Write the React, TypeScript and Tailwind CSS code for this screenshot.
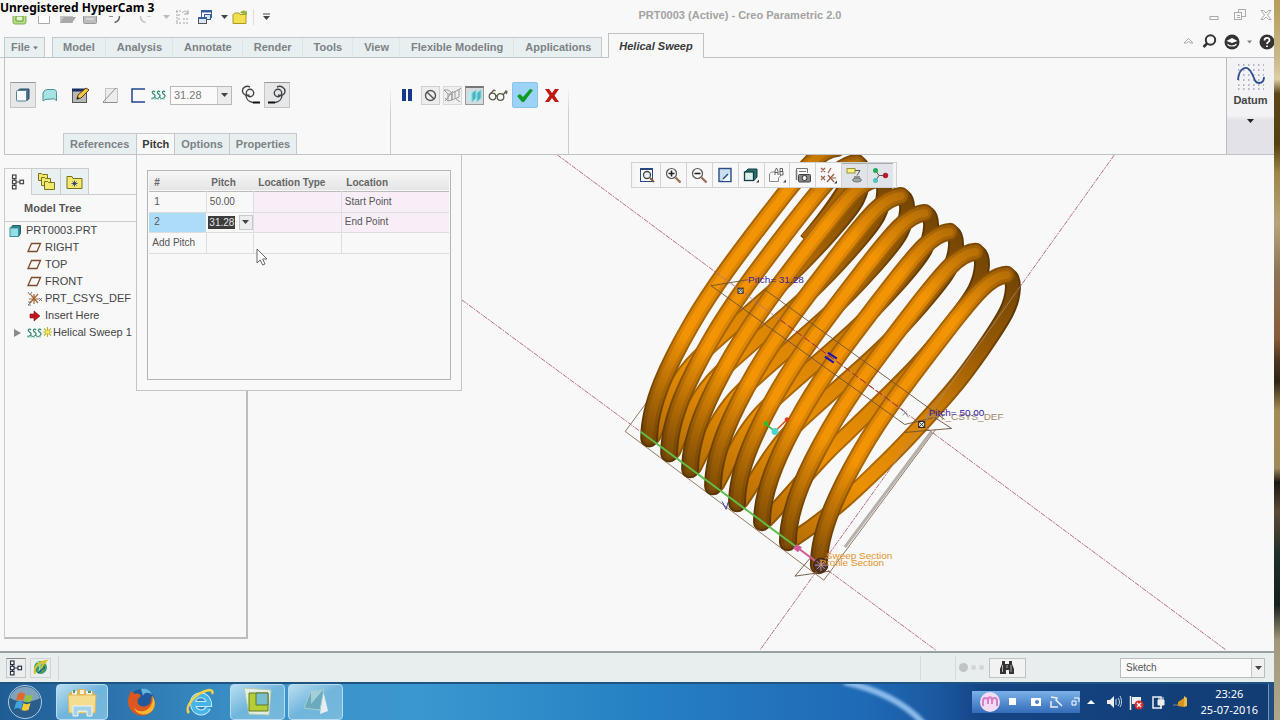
import type { ReactNode } from "react";

const TABS = ["Model", "Analysis", "Annotate", "Render", "Tools", "View", "Flexible Modeling", "Applications"];

const PLANES = ["RIGHT", "TOP", "FRONT"];

// lower end of every coil turn on the sweep trajectory
const TURNS = [
  [649, 439],
  [669, 454],
  [690, 470],
  [713, 487],
  [737, 504],
  [762, 523],
  [788, 543],
  [819, 566],
];

function Icon({ w = 16, h = 16, children }: { w?: number; h?: number; children: ReactNode }) {
  return (
    <svg width={w} height={h} viewBox={`0 0 ${w} ${h}`} fill="none" className="shrink-0" aria-hidden="true">
      {children}
    </svg>
  );
}

function Caret({ className = "text-[#444]" }: { className?: string }) {
  return (
    <svg width="7" height="4" viewBox="0 0 7 4" className={`shrink-0 ${className}`} aria-hidden="true">
      <path d="M0 0h7L3.5 4z" fill="currentColor" />
    </svg>
  );
}

function TreeIcon({ color = "#444" }: { color?: string }) {
  return (
    <Icon w={14} h={16}>
      <path d="M3.5 4v8M5 8h5" stroke={color} />
      <g fill="#fff" stroke={color} strokeWidth="1.2">
        <rect x="1.5" y="1" width="3.5" height="3.5" />
        <rect x="1.5" y="6.2" width="3.5" height="3.5" />
        <rect x="1.5" y="11.4" width="3.5" height="3.5" />
        <rect x="9" y="6.2" width="3.5" height="3.5" />
      </g>
    </Icon>
  );
}

function CoilIcon() {
  return (
    <Icon w={15} h={10}>
      <g stroke="#2f8673" strokeWidth="1.2">
        <path d="M4 2C2 0 .5 2 2 3.500S5 5 3.500 7 .500 8 .500 8" />
        <path d="M9 2C7 0 5.500 2 7 3.500S10 5 8.500 7 5 9 3.500 7" />
        <path d="M14 2C12 0 10.500 2 12 3.500S15 5 13.500 7 10 9 8.500 7" />
      </g>
      <path d="M0 9h14" stroke="#7fbfae" strokeDasharray="2 1" />
    </Icon>
  );
}

function QuickAccess() {
  return (
    <div className="flex h-[34px] items-center pl-3">
      <button aria-label="Creo" className="w-[24px]">
        <Icon w={16} h={18}>
          <rect x="1" y="2" width="13" height="14" rx="2" fill="#b6dd83" stroke="#7fae57" />
          <path d="M4 8h7v5H4z" fill="#e5f5c8" stroke="#5f9a3e" />
        </Icon>
      </button>
      <button aria-label="New" className="w-[23px]">
        <Icon w={16} h={18}>
          <path d="M2.500 2.500h8l3 3v10h-11z" fill="#fff" stroke="#aaa" />
        </Icon>
      </button>
      <button aria-label="Open" className="w-[23px]">
        <Icon w={18} h={18}>
          <path d="M1 15V6h5l1 2h7v7z" fill="#c4c4c4" />
          <path d="M1 15l4-6h12l-4 6z" fill="#a8a8a8" />
        </Icon>
      </button>
      <button aria-label="Save" className="w-[25px]">
        <Icon w={16} h={18}>
          <rect x="1.500" y="3.500" width="13" height="12" rx="1" fill="#bdbdbd" stroke="#999" />
          <path d="M4 11h8" stroke="#eee" />
        </Icon>
      </button>
      <button aria-label="Undo" className="w-[32px]">
        <Icon w={16} h={18}>
          <path d="M2 8C4 3 12 2 12.500 8c0 4-3 6-5 6.500M2 8V3M2 8h4" stroke="#666" strokeWidth="1.500" />
        </Icon>
      </button>
      <button aria-label="Redo" className="flex w-[36px] items-center gap-2">
        <Icon w={16} h={18}>
          <path d="M12 8C10 3 2 2 1.500 8c0 4 3 6 5 6.500M12 8V3M12 8H8" stroke="#c2c2c2" strokeWidth="1.500" />
        </Icon>
        <Caret className="text-[#bbb]" />
      </button>
      <button aria-label="Regenerate" className="w-[22px]">
        <Icon w={15} h={16}>
          <path d="M2 2v12M1 2h5M3 6h3M3 10h3M1 14h5M8 10h6M8 14h6" stroke="#a5a5a5" strokeDasharray="2 1" />
          <path d="M7 4c2-3 5-2 6 1m0-4v4h-4" stroke="#a5a5a5" />
        </Icon>
      </button>
      <button aria-label="Windows" className="flex w-[35px] items-center gap-2">
        <Icon w={16} h={16}>
          <rect x="4.500" y="1.500" width="10" height="7" fill="#fff" stroke="#365f9b" />
          <path d="M4 2.500h11" stroke="#365f9b" strokeWidth="2" />
          <rect x="7.500" y="5.500" width="6" height="5" fill="#dbe6f5" stroke="#365f9b" />
          <rect x="1.500" y="8.500" width="8" height="6" fill="#dbe6f5" stroke="#555" />
          <path d="M1 9h9" stroke="#365f9b" strokeWidth="2" />
        </Icon>
        <Caret />
      </button>
      <button aria-label="Close" className="flex w-[22px] border-r border-[#ddd]">
        <Icon w={17} h={16}>
          <path d="M1 14.500v-9l2-1.500h4l1 1.500h6v9z" fill="#f4e04f" stroke="#ab9a2a" />
          <path d="M8 4c2-3 5-3 6-1l1-2v5h-5l2-1" fill="#9ab33c" />
        </Icon>
      </button>
      <button aria-label="Customize" className="ml-[8px]">
        <Icon w={9} h={8}>
          <path d="M1 1h7" stroke="#444" />
          <path d="M1 3h7L4.500 7z" fill="#444" />
        </Icon>
      </button>
    </div>
  );
}

function TitleBar() {
  return (
    <header className="relative flex items-start justify-between">
      <QuickAccess />
      <h1 className="absolute inset-x-0 top-[8px] mx-auto w-fit pl-[206px] text-[11px] leading-[14px] font-bold text-[#a3a3a3]">
        PRT0003 (Active) - Creo Parametric 2.0
      </h1>
      <div className="relative flex h-[30px] items-center gap-[14px] pr-[2px]">
        <button aria-label="Minimize">
          <Icon w={11} h={12}>
            <rect x="1" y="7.500" width="8" height="3" stroke="#aaa" />
          </Icon>
        </button>
        <button aria-label="Restore">
          <Icon w={12} h={12}>
            <rect x="4.500" y=".500" width="7" height="7" fill="#f7f7f7" stroke="#aaa" />
            <rect x=".500" y="3.500" width="7" height="7" fill="#f7f7f7" stroke="#aaa" />
            <path d="M3 6.500h3M3 8.500h3" stroke="#aaa" />
          </Icon>
        </button>
        <button aria-label="Close window">
          <Icon w={12} h={12}>
            <path d="M1 1.500h2.500L6 4l2.500-2.500H11L7.500 6l3.500 4.500H8.500L6 8l-2.500 2.500H1L4.500 6z" stroke="#aaa" />
          </Icon>
        </button>
      </div>
      <span className="absolute top-0 left-0 bg-[#f8f8f8] pr-1 font-['Noto_Sans',sans-serif] text-[12px] leading-[16px] font-bold text-black">
        Unregistered HyperCam 3
      </span>
    </header>
  );
}

function RibbonTabs() {
  return (
    <nav className="flex h-[24px] items-end border-b border-[#bfc3c6] pl-1 text-[11px] font-bold text-[#7d8285]">
      <button className="flex h-[20px] w-[41px] items-center justify-center gap-[3px] border border-b-0 border-[#c2c9cb] bg-[#e9f0f1]">
        File
        <Caret className="w-[5px] text-[#777]" />
      </button>
      <div className="ml-[7px] flex h-[20px] gap-px border border-b-0 border-[#c2c9cb] bg-[#e7eff0]">
        {TABS.map((t) => (
          <button key={t} className="border-r border-[#dde5e7] px-[10px] last:border-r-0">
            {t}
          </button>
        ))}
      </div>
      <button className="relative top-px ml-[6px] h-[25px] border border-b-0 border-[#bfc3c6] bg-[#f8f8f8] px-[10px] text-[#3a3a3a] italic">
        Helical Sweep
      </button>
      <div className="ml-auto flex h-[24px] items-center gap-[7px] pb-[7px]">
        <button aria-label="Minimize ribbon">
          <Icon w={12} h={10}>
            <path d="M1 6l4.500-4.500L10 6H7.500l-2-1.500-2 1.500z" stroke="#aaa" />
          </Icon>
        </button>
        <button aria-label="Search">
          <Icon w={15} h={15}>
            <circle cx="8.500" cy="6" r="4.700" stroke="#333" strokeWidth="2" />
            <path d="M5 9.500L1.500 13" stroke="#333" strokeWidth="2.600" />
          </Icon>
        </button>
        <button aria-label="Learning" className="flex items-center gap-[7px]">
          <Icon w={16} h={16}>
            <circle cx="8" cy="8" r="7.500" fill="#333" />
            <path d="M2.500 7L8 4l5.500 3L8 9z" fill="#fff" />
            <path d="M3.500 9.500c2 2.500 6 2.500 9 0v1.500c-2 2-7 2-9 0z" fill="#fff" />
          </Icon>
          <Caret className="w-[5px]" />
        </button>
        <button aria-label="Help">
          <Icon w={15} h={16}>
            <circle cx="8" cy="8" r="7.500" fill="#333" />
            <path d="M5.500 6.500C5.500 3 10.500 3 10.500 6.200 10.500 8 8 7.800 8 10M8 11.500v1.500" stroke="#fff" strokeWidth="1.800" />
          </Icon>
        </button>
      </div>
    </nav>
  );
}

function PitchTable() {
  return (
    <div className="absolute -left-px top-full z-20 h-[237px] w-[326px] cursor-default border border-[#c4c4c4] bg-[#f8f8f8] px-[10px] pt-[15px] pb-[10px] font-normal">
      <div className="h-full border border-[#b5b5b5] px-px">
        <table className="w-full table-fixed border-collapse text-left text-[10px] leading-[12px] text-[#555]">
          <colgroup>
            <col className="w-[57px]" />
            <col className="w-[47px]" />
            <col className="w-[88px]" />
            <col />
          </colgroup>
          <thead>
            <tr className="h-[20px] border-b border-[#bbb] bg-linear-to-b from-[#f7f7f7] to-[#e5e5e5] font-bold text-[#666]">
              <th className="pt-1 pl-[5px]">#</th>
              <th className="pt-1 pl-[5px]">Pitch</th>
              <th className="pt-1 pl-[5px] whitespace-nowrap">Location Type</th>
              <th className="pt-1 pl-[5px]">Location</th>
            </tr>
          </thead>
          <tbody>
            <tr className="h-[21px] border-b border-[#ddd]">
              <td className="border-r border-[#ddd] pl-[5px]">1</td>
              <td className="border-r border-[#ddd] pl-[3px]">50.00</td>
              <td className="border-r border-[#e2dbe2] bg-[#f7eef7]" />
              <td className="bg-[#f7eef7] pl-[3px]">Start Point</td>
            </tr>
            <tr className="h-[20px] border-b border-[#ddd]">
              <td className="bg-[#addcf9] pl-[5px]">2</td>
              <td className="border-r border-[#ddd] p-0">
                <div className="flex items-center justify-between pl-[2px]">
                  <input
                    aria-label="Pitch 2"
                    defaultValue="31.28"
                    className="h-[13px] w-[27px] bg-[#3c3c3c] pl-px text-[10px] text-[#e6e6e6] outline-none"
                  />
                  <button
                    aria-label="Pitch values"
                    className="flex h-[15px] w-[14px] items-center justify-center border border-[#c9c9c9] bg-[#ededed]"
                  >
                    <Caret />
                  </button>
                </div>
              </td>
              <td className="border-r border-[#e2dbe2] bg-[#f7eef7]" />
              <td className="bg-[#f7eef7] pl-[3px]">End Point</td>
            </tr>
            <tr className="h-[21px] border-b border-[#ddd]">
              <td className="border-r border-[#ddd] pl-[3px] whitespace-nowrap">Add Pitch</td>
              <td className="border-r border-[#ddd]" />
              <td className="border-r border-[#ddd]" />
              <td />
            </tr>
          </tbody>
        </table>
      </div>
      <svg width="12" height="18" viewBox="0 0 12 18" className="absolute top-[93px] left-[119px]" aria-hidden="true">
        <path d="M1 1v14l3.200-3 2.500 5 2.300-1-2.300-5H11z" fill="#fff" stroke="#666" />
      </svg>
    </div>
  );
}

function SweepTools() {
  return (
    <div className="flex items-center pt-[24px] pl-[5px]">
      <button aria-label="Solid" className="flex h-[26px] w-[26px] items-center justify-center border border-[#c4c4c4] border-t-[#999] bg-[#e6e7e9]">
        <Icon>
          <path d="M2.500 4l2-2h9.500v9.500l-2.500 2.500" fill="#46718c" stroke="#284b66" />
          <rect x="1.500" y="3.500" width="10" height="10.500" rx="1" fill="#f8fcfd" stroke="#5b8196" />
        </Icon>
      </button>
      <button aria-label="Surface" className="flex w-[28px] justify-center">
        <Icon>
          <path d="M1 14V6c1-3 3-3.500 5-3.500h5c2.500 0 3.500 1 3.500 3V14c-1-2-2.500-2.500-5-2-3 .500-6-.500-8.500 2z" fill="#a5e3e4" stroke="#4c9198" />
        </Icon>
      </button>
      <button aria-label="Edit section" className="flex w-[32px] justify-center">
        <Icon w={19} h={18}>
          <rect x="1.500" y="4.500" width="14" height="12" fill="#b8b8b8" stroke="#555" />
          <path d="M1 4h15" stroke="#1b2f62" strokeWidth="3" />
          <path d="M6 13l1-4 8-7 3 2-8 8z" fill="#f4c646" stroke="#5a3c14" />
          <path d="M5.500 13.500l1-3 2 2z" fill="#222" />
        </Icon>
      </button>
      <button aria-label="Thin" className="flex w-[28px] justify-center">
        <Icon w={17} h={17}>
          <rect x="3.500" y="1.500" width="12" height="14" fill="#ececec" stroke="#c3c3c3" />
          <path d="M1 15.500h14M1 15L14 1" stroke="#8d8d8d" />
        </Icon>
      </button>
      <button aria-label="Section side" className="ml-[6px] flex w-[16px] justify-center">
        <Icon w={15} h={15}>
          <path d="M14 1H1v13h13" stroke="#24448a" strokeWidth="1.500" />
        </Icon>
      </button>
      <div className="flex w-[24px] justify-center">
        <CoilIcon />
      </div>
      <div className="flex h-[19px] w-[62px] border border-[#b8b8b8] bg-[#fafafa]">
        <input aria-label="Pitch value" defaultValue="31.28" className="w-0 min-w-0 flex-1 pl-[3px] text-[11px] text-[#777] outline-none" />
        <button aria-label="Pitch history" className="flex w-[14px] items-center justify-center border-l border-[#ccc] bg-[#ececec]">
          <Caret />
        </button>
      </div>
      <button aria-label="Left handed" className="ml-[6px] flex h-[26px] w-[26px] items-center justify-center">
        <Icon w={20} h={20}>
          <path d="M9 2C5 0 1 3 1.500 6.500S6 11 8.500 10" stroke="#444" strokeWidth="1.400" />
          <circle cx="9" cy="8" r="3.700" stroke="#444" strokeWidth="1.400" />
          <path d="M5 10c0 4 3 7 7 7.500" stroke="#444" strokeWidth="1.400" />
          <path d="M12 17.500h7" stroke="#111" strokeWidth="2" />
        </Icon>
      </button>
      <button aria-label="Right handed" className="flex h-[26px] w-[26px] items-center justify-center border border-[#c4c4c4] border-t-[#999] bg-[#e6e7e9]">
        <Icon w={20} h={20}>
          <path d="M10 2c4-2 8 1 8 4.500S14 11 11 10" stroke="#444" strokeWidth="1.400" />
          <circle cx="11" cy="8" r="3.700" stroke="#444" strokeWidth="1.400" />
          <path d="M15 10c0 4-3 7-7 7.500" stroke="#444" strokeWidth="1.400" />
          <path d="M1 17.500h7" stroke="#111" strokeWidth="2" />
        </Icon>
      </button>
    </div>
  );
}

function Controls() {
  return (
    <div className="flex items-center gap-[3px] pt-[24px] pl-[5px]">
      <button aria-label="Pause" className="flex w-[22px] justify-center">
        <Icon w={12} h={14}>
          <path d="M1 1h4v12H1zM7 1h4v12H7z" fill="#17398b" />
        </Icon>
      </button>
      <button aria-label="No preview" className="flex h-[19px] w-[19px] items-center justify-center border border-[#cfcfcf] bg-[#ededed]">
        <Icon w={13} h={13}>
          <circle cx="6.500" cy="6.500" r="5" stroke="#555" strokeWidth="1.400" />
          <path d="M3 3l7 7" stroke="#555" strokeWidth="1.400" />
        </Icon>
      </button>
      <button aria-label="Unattached preview" className="flex h-[19px] w-[19px] items-center justify-center border border-[#d8d8d8] bg-[#efefef]">
        <Icon w={18} h={16}>
          <path d="M0 3h4l4 3 8-4M0 3l4 4v7l-3-3M4 7h4v6l7-3V3l2-2M8 6v7L4 14M11 4v7l5 4M1 14l8-10" stroke="#999" />
        </Icon>
      </button>
      <button aria-label="Attached preview" className="flex h-[19px] w-[19px] items-center justify-center border border-[#999] border-t-2 border-t-[#777] bg-[#d4dcde]">
        <Icon w={16} h={15}>
          <path d="M1 5l4-2v9l-4 1z" fill="#bde8ec" />
          <path d="M5 5l4-3v8l-4 4zM10 5l4-3v8l-4 4z" fill="#48b5c4" stroke="#81d6dd" />
        </Icon>
      </button>
      <button aria-label="Verify" className="flex w-[22px] justify-center">
        <Icon w={20} h={14}>
          <g stroke="#5e5a4a" strokeWidth="1.300">
            <circle cx="4.500" cy="8.500" r="3.300" />
            <circle cx="12.500" cy="9" r="3.300" />
            <path d="M7.800 8h1.500M2 6l4-4 1.500 1M15 7l3-4 1 1-1 2" />
          </g>
        </Icon>
      </button>
      <button aria-label="OK" className="flex h-[26px] w-[26px] items-center justify-center rounded-xs border border-[#86c4ec] bg-[#9bd2f6]">
        <Icon w={18} h={16}>
          <path d="M1 9l3-2 3 3 7-8 3 1-9 12H6z" fill="#0f9a23" />
        </Icon>
      </button>
      <button aria-label="Cancel" className="flex w-[22px] justify-center">
        <Icon w={16} h={15}>
          <path d="M1 1h4l3 4 3-4h4l-4.500 6.500L15 14h-4L8 10l-3 4H1l4.500-6.500z" fill="#c11a14" />
        </Icon>
      </button>
    </div>
  );
}

function Ribbon() {
  const tab = "h-[21px] border border-[#c2c9cb] border-b-0";
  return (
    <section className="relative ml-1 flex h-[97px] border-b border-l border-[#bfc3c6]">
      <div className="flex w-[385px] flex-col justify-between">
        <SweepTools />
        <nav className="flex pl-[58px] text-[11px] font-bold text-[#7d8285]">
          <button className={`${tab} bg-[#e7eff0] pr-[7px] pl-[6px]`}>References</button>
          <div className={`${tab} relative border-l-0`}>
            <button className="h-[20px] px-[5px] text-[#3a3a3a]">Pitch</button>
            <PitchTable />
          </div>
          <button className={`${tab} border-l-0 bg-[#e7eff0] px-[6px]`}>Options</button>
          <button className={`${tab} border-l-0 bg-[#e7eff0] px-[6px]`}>Properties</button>
        </nav>
      </div>
      <div className="w-px bg-linear-to-b from-transparent from-30% to-[#ccc] to-60%" />
      <div className="w-[177px]">
        <Controls />
      </div>
      <div className="w-px bg-linear-to-b from-transparent from-30% to-[#ccc] to-60%" />
      <button className="ml-auto flex w-[48px] flex-col items-center border-l border-[#bbb] bg-linear-to-b from-[#f3f3f5] from-60% to-[#e2e2e8] to-65% text-[11px] leading-[14px] font-bold text-[#444]">
        <span className="pt-[5px]">
          <Icon w={28} h={28}>
            <path d="M1 2h26M1 7h26M1 12h26M1 17h26M1 22h26M1 26h26" stroke="#9aa0b4" strokeWidth="1.400" strokeDasharray="1.500 3.500" />
            <path d="M1 17C2 4 10 2 14 9c4 6 3 11 8 11 4 0 5-2 5-6" stroke="#2e4f8e" strokeWidth="1.800" />
          </Icon>
        </span>
        <span className="pt-[2px] pb-[12px]">Datum</span>
        <Caret className="text-[#222]" />
      </button>
    </section>
  );
}

function ModelTree() {
  return (
    <aside className="relative w-[248px] shrink-0 pt-[13px] pb-[12px] pl-1">
      <div className="flex h-full flex-col border-r-2 border-b-2 border-l border-[#bdbdbd] border-l-[#ccc]">
        <div className="flex h-[27px] border-b border-[#ccc] [&>button]:flex [&>button]:items-center [&>button]:justify-center">
          <button aria-label="Model Tree" className="-mb-px h-[27px] w-[27px] border-t border-r border-[#ccc] bg-[#f8f8f8]">
            <TreeIcon />
          </button>
          <button aria-label="Folder Browser" className="w-[29px] border-t border-r border-[#ccc] bg-[#e9f0f1]">
            <Icon w={19} h={19}>
              <g fill="#f2e86d" stroke="#77701f">
                <path d="M1.500 8.500v-7h3l1 1h5v6z" />
                <path d="M4.500 13.500v-8h3l1 1h5v7z" />
                <path d="M7.500 17.500v-8h3l1 1h6v7z" />
              </g>
            </Icon>
          </button>
          <button aria-label="Favorites" className="w-[28px] border-t border-r border-[#ccc] bg-[#e9f0f1]">
            <Icon w={17} h={16}>
              <path d="M1 14.500v-12h5l1 2h9v10z" fill="#f2e86d" stroke="#77701f" />
              <path d="M8.500 6.500v6M5.500 9.500h6M6.500 7.500l4 4M10.500 7.500l-4 4" stroke="#222a77" strokeWidth=".800" />
            </Icon>
          </button>
        </div>
        <h2 className="h-[27px] border-b border-[#ccc] pl-[19px] text-[11px] leading-[27px] font-bold text-[#555]">Model Tree</h2>
        <ul className="text-[11px] leading-[17px] text-[#444]">
          <li className="flex items-center gap-[4px] pl-[4px]">
            <Icon w={13} h={13}>
              <path d="M1.500 4.500l2-3h8v8l-2 3" fill="#2e7c88" stroke="#26626c" />
              <rect x="1" y="4" width="8.500" height="8.500" fill="#92e0e5" stroke="#3d8f98" />
            </Icon>
            PRT0003.PRT
          </li>
          {PLANES.map((p) => (
            <li key={p} className="flex items-center gap-[3px] pl-[22px]">
              <Icon w={15} h={11}>
                <path d="M4.500 1.500h9l-3.500 8H1z" stroke="#7e4a2c" strokeWidth="1.300" />
              </Icon>
              {p}
            </li>
          ))}
          <li className="flex items-center gap-[3px] pl-[22px]">
            <Icon w={15} h={15}>
              <path d="M2 8h10M7 3v10M4 4l7 8M11 3l-8 9" stroke="#a36638" strokeWidth="1.200" />
              <path d="M1 1l2 3 2-3M12 7l3 3M15 7l-3 3M1 11h3l-3 3h3" stroke="#555" strokeWidth=".800" />
            </Icon>
            PRT_CSYS_DEF
          </li>
          <li className="flex items-center gap-[3px] pl-[22px]">
            <Icon w={15} h={12}>
              <path d="M3 4h4V1l6 5-6 5V8H3z" fill="#c3161c" stroke="#7c1014" strokeWidth=".600" />
            </Icon>
            Insert Here
          </li>
          <li className="flex items-center pl-[8px]">
            <Icon w={14} h={10}>
              <path d="M1 1v8l7-4z" fill="#8a8a8a" />
            </Icon>
            <CoilIcon />
            <Icon w={11} h={12}>
              <path d="M5.500 0v10M1 5h9M2 1.500l7 7M9 1.500l-7 7" stroke="#b9b32d" strokeWidth="1.200" />
              <path d="M4 3.500h3v3H4z" fill="#f8ef45" />
            </Icon>
            Helical Sweep 1
          </li>
        </ul>
      </div>
    </aside>
  );
}

function turnFront(x: number, y: number) {
  const p = (dx: number, dy: number) => `${x + dx} ${y + dy}`;
  return `M${p(0, 0)}C${p(0, -35)} ${p(20, -76)} ${p(42, -114)}S${p(90, -186)} ${p(124, -230)}S${p(172, -290)} ${p(188, -291)}`;
}

// the far half of a turn, from its top down to the end of the previous turn
function turnBack(i: number) {
  const [x, y] = TURNS[i];
  const [ex, ey] = TURNS[i - 1];
  const k = Math.min(34, (7 - i) * 13 + 4);
  const p = (dx: number, dy: number) => `${x + dx} ${y + dy}`;
  return `M${p(188, -291)}C${p(198, -289)} ${p(195, -268)} ${p(188, -254)}S${p(154 - k / 3, -198)} ${p(134 - k / 2, -174)}S${p(88 - k, -120)} ${p(64 - k, -97)}S${p(14 - k / 2, -50)} ${ex + 4} ${ey - 2}`;
}

function Tube({ d, back = false }: { d: string; back?: boolean }) {
  return (
    <g fill="none" strokeLinecap="round" strokeLinejoin="round">
      <path d={d} stroke={back ? "url(#backEdge)" : "url(#edge)"} strokeWidth={back ? 16 : 18} />
      <path d={d} stroke={back ? "url(#backBody)" : "url(#body)"} strokeWidth={back ? 12 : 14} />
      <path d={d} stroke={back ? "url(#backBody)" : "url(#shine)"} strokeWidth="8" />
    </g>
  );
}

function Coil() {
  return (
    <g>
      <path d="M858 160C851 184 826 218 806 241" stroke="#754404" strokeWidth="15" fill="none" />
      <path d="M858 160C851 184 826 218 805 239" stroke="#a86407" strokeWidth="10" fill="none" />
      {TURNS.map(([x], i) => (i === 0 ? null : <Tube key={x} back d={turnBack(i)} />))}
      {TURNS.map(([x, y]) => (
        <Tube key={x} d={turnFront(x, y)} />
      ))}
    </g>
  );
}

function TubeGradient({ id, stops }: { id: string; stops: [number, string][] }) {
  return (
    <linearGradient id={id} gradientUnits="userSpaceOnUse" x1="730" y1="500" x2="940" y2="220">
      {stops.map(([offset, color]) => (
        <stop key={offset} offset={offset} stopColor={color} />
      ))}
    </linearGradient>
  );
}

function Graphics() {
  return (
    <svg viewBox="248 155 1026 497" className="h-full w-full" role="img" aria-label="Helical sweep model">
      <defs>
        <TubeGradient id="edge" stops={[[0, "#5a3503"], [0.3, "#a96503"], [0.8, "#a96503"], [1, "#7d4904"]]} />
        <TubeGradient id="body" stops={[[0, "#744504"], [0.3, "#dd8504"], [0.8, "#dd8504"], [1, "#9d5e05"]]} />
        <TubeGradient id="shine" stops={[[0, "#824e05"], [0.3, "#f39405"], [0.8, "#f39405"], [1, "#b46d06"]]} />
        <TubeGradient id="backEdge" stops={[[0, "#8a5304"], [0.3, "#b06a04"], [0.6, "#965a04"], [0.9, "#5e3803"]]} />
        <TubeGradient id="backBody" stops={[[0, "#b46d05"], [0.25, "#ec9005"], [0.5, "#d98405"], [0.75, "#9c5d04"], [1, "#744504"]]} />
      </defs>
      <path d="M650 398L625 432L824 581L936 430" fill="none" stroke="#8f7862" />
      <path d="M845 548L932 432" stroke="#b5b0ab" strokeWidth="3" />
      <Coil />
      <g fill="none" stroke="#b5707f" strokeDasharray="5 1 2 1">
        <path d="M557 155L1227 651" />
        <path d="M461 300L640 432M821 566L936 651" />
        <path d="M1115 155L1017 292M890 470L760 651" />
      </g>
      <path d="M1017 292L890 470" stroke="#a98a76" strokeWidth=".800" />
      <g fill="none" stroke="#69503a" strokeWidth=".900">
        <path d="M748 280L711 286L905 425M765 290L945 420" />
        <path d="M905 425L935 418L952 429L905 433M795 577L822 545M795 577L830 572" />
      </g>
      <path d="M780 320L905 412" stroke="#a12b16" strokeDasharray="7 3" />
      <path d="M640 432L797 548" stroke="#5fbd47" strokeWidth="2" />
      <path d="M797 548L821 566" stroke="#d25b96" strokeWidth="2" />
      <path d="M793 549l4-4 5 3-4 5z" fill="#d25b96" />
      <path d="M828 353l9 6M825 357l9 6" stroke="#1912b4" strokeWidth="2" />
      <path d="M766 425L775 432" stroke="#35b936" strokeWidth="1.500" />
      <path d="M775 432L786 421" stroke="#d74718" strokeWidth="1.500" />
      <circle cx="766" cy="424" r="2.200" fill="#2ac02f" />
      <circle cx="787" cy="420" r="2.200" fill="#e2391d" />
      <circle cx="775" cy="432" r="3.500" fill="#4bd7ce" />
      <path d="M722 502l4 8 2-7" stroke="#403cb0" fill="none" />
      <circle cx="821" cy="566" r="7" fill="#58331f" stroke="#382218" />
      <path d="M821 560v12M815 566h12M817 562l8 8M825 562l-8 8" stroke="#a69bc0" />
      <g fill="#f2f2f2" stroke="#222">
        <rect x="738" y="288.500" width="5" height="5" />
        <rect x="919" y="422" width="6" height="6" />
      </g>
      <path d="M738 288l5 5M743 288l-5 5M919 422l6 6M925 422l-6 6" stroke="#333" />
      <path d="M903 410l6 8M907 412l-4 4" stroke="#8a8f9c" />
      <g className="font-['Liberation_Sans',Arial,sans-serif] text-[10px]">
        <text x="748" y="283" fill="#35209d">Pitch= 31.28</text>
        <text x="926" y="421" fill="#a1896a">PRT_CSYS_DEF</text>
        <text x="929" y="417" fill="#35209d">Pitch= 50.00</text>
        <text x="826" y="560" fill="#e0942b">Sweep Section</text>
        <text x="820" y="567" fill="#e0942b">Profile Section</text>
      </g>
    </svg>
  );
}

const Lens = ({ sign }: { sign: string }) => (
  <Icon w={17} h={17}>
    <circle cx="6.500" cy="6.500" r="5" fill="#fafafa" stroke="#555" strokeWidth="1.200" />
    <path d={sign} stroke="#222" strokeWidth="1.600" />
    <path d="M10.500 10.500l5 5" stroke="#9b715a" strokeWidth="2.400" />
  </Icon>
);

const VIEW_TOOLS = [
  {
    name: "Refit",
    icon: (
      <Icon>
        <rect x="1.500" y="1.500" width="12" height="13" fill="#fff" stroke="#27477f" />
        <path d="M1 2h13" stroke="#27477f" strokeWidth="2" />
        <circle cx="8" cy="8" r="3.500" fill="#e7f1f8" stroke="#444" strokeWidth="1.300" />
        <path d="M11 11l4 4" stroke="#8d5a42" strokeWidth="2" />
      </Icon>
    ),
  },
  { name: "Zoom In", icon: <Lens sign="M3.500 6.500h6M6.500 3.500v6" /> },
  { name: "Zoom Out", icon: <Lens sign="M3.500 6.500h6" /> },
  {
    name: "Repaint",
    icon: (
      <Icon>
        <rect x="2" y="1.500" width="12" height="13" fill="#c9def2" stroke="#2b4d87" strokeWidth="1.400" />
        <path d="M6 13l7-7v8H6z" fill="#eef6fd" />
        <path d="M6 12l5-5" stroke="#2b4d87" strokeWidth="1.500" />
      </Icon>
    ),
  },
  {
    name: "Display Style",
    icon: (
      <Icon>
        <path d="M2 5l3-3h9v8l-3 3.500z" fill="#286d70" stroke="#173f43" />
        <rect x="1.500" y="5" width="9" height="8.500" fill="#d9f0ef" stroke="#173f43" strokeWidth="1.300" />
        <path d="M13 15.500h3v-3z" fill="#444" />
      </Icon>
    ),
  },
  {
    name: "Saved Orientations",
    icon: (
      <Icon w={18} h={16}>
        <path d="M1.500 7l2-2H7M1.500 7v7.500h9V11l2-2v-1" stroke="#8a8a8a" />
        <path d="M7 8V4l1.500-3L10 4v4M7 5.500h3M12 8V1.500h2.500v3H12h3V8z" stroke="#555" strokeWidth=".900" />
        <path d="M15 15.500h3v-3z" fill="#444" />
      </Icon>
    ),
  },
  {
    name: "View Manager",
    icon: (
      <Icon>
        <path d="M1.500 13V1.500h11V6M4 4.500h7" stroke="#777" />
        <path d="M1.500 3v10" stroke="#777" strokeWidth="1.500" />
        <rect x="3.500" y="7.500" width="12" height="7.500" rx="1" fill="#888" stroke="#444" />
        <circle cx="9.500" cy="11" r="2.500" fill="#eee" stroke="#333" />
      </Icon>
    ),
  },
  {
    name: "Datum Display",
    icon: (
      <Icon w={17} h={17}>
        <path d="M1 1l4 4M5 1L1 5M11 1L8 6M1 9l4 4M5 9l-4 4M7 15l7-8M8 8l6 7M12 11h4" stroke="#9b5a45" strokeWidth="1.200" />
        <path d="M14 16.500h3v-3z" fill="#444" />
      </Icon>
    ),
  },
  {
    name: "Annotation Display",
    pressed: true,
    icon: (
      <Icon w={17} h={17}>
        <rect x="1" y="1.500" width="8" height="4.500" fill="#f5f17a" stroke="#98923d" />
        <path d="M9 3.500h5l-3 5" stroke="#555" />
        <path d="M8 10h6" stroke="#777" strokeWidth="1.500" />
        <ellipse cx="11" cy="13" rx="4.500" ry="2" fill="#9eaaa9" stroke="#777" />
      </Icon>
    ),
  },
  {
    name: "Spin Center",
    pressed: true,
    icon: (
      <Icon w={17} h={17}>
        <path d="M3.500 3.500L7 8.500l-3.500 5M7 8.500h7" stroke="#555" />
        <circle cx="3.500" cy="3.500" r="2.500" fill="#20ac53" />
        <circle cx="3.500" cy="13.500" r="2.500" fill="#4fc2c4" />
        <circle cx="13.500" cy="8.500" r="2.700" fill="#b11e32" />
      </Icon>
    ),
  },
];

function ViewToolbar() {
  return (
    <div className="absolute top-[7px] left-[383px] flex h-[26px] w-[266px] border border-[#cdd3d5] bg-[#f4f4f4] px-[3px]">
      {VIEW_TOOLS.map((t) => (
        <button
          key={t.name}
          aria-label={t.name}
          className={`flex min-w-0 flex-1 items-center justify-center border-r border-[#d2d2d2] last:border-r-0 ${
            t.pressed ? "border-t border-t-[#aaa] bg-[#e0e4e8]" : "bg-[#f8f8f8]"
          }`}
        >
          {t.icon}
        </button>
      ))}
    </div>
  );
}

function StatusBar() {
  return (
    <footer className="flex h-[31px] shrink-0 items-center border-t-2 border-[#9a9fa1] bg-[#e8edee] pl-[6px]">
      <button aria-label="Navigator" className="flex h-[20px] w-[20px] items-center justify-center border border-[#c5c5c5] border-t-[#888] bg-[#eee]">
        <TreeIcon color="#283246" />
      </button>
      <button aria-label="Browser" className="ml-[4px] flex h-[20px] w-[21px] items-center justify-center border border-[#d2d2d2]">
        <Icon w={17} h={17}>
          <circle cx="8.500" cy="8.500" r="6.500" fill="#3d9a6b" />
          <path d="M5 3c3 0 4 4 2 10M3 9c3-4 7-5 11-6" stroke="#9be0bb" strokeWidth="1.500" />
          <path d="M3 15C1 9 6 3 14 2c-4 4-5 6-4 10" stroke="#dfc11f" strokeWidth="1.800" />
          <path d="M6 14l7-6" stroke="#1b5b83" strokeWidth="1.500" />
        </Icon>
      </button>
      <div className="ml-[7px] h-[24px] w-px bg-[#d0d5d6]" />
      <div className="mr-[34px] ml-auto h-[24px] w-px bg-[#d5dadb]" />
      <div className="flex h-[24px] items-center gap-[3px] border-l border-[#d5dadb] px-[3px]">
        <span className="h-[9px] w-[9px] rounded-full bg-[#c1c4c5]" />
        <span className="h-[5px] w-[5px] rounded-full bg-[#d3d6d7]" />
        <span className="h-[5px] w-[5px] rounded-full bg-[#d3d6d7]" />
      </div>
      <button aria-label="Find" className="ml-[2px] flex h-[20px] w-[37px] items-center justify-center border border-[#bfc3c4] bg-[#f1f2f2]">
        <Icon w={17} h={15}>
          <path d="M3 1h3v3h4V1h3v3l2 5v5h-5v-4H7v4H1V9l2-5z" fill="#333" />
          <path d="M3.500 5v7M12 5v7M8 5v3" stroke="#aaa" />
        </Icon>
      </button>
      <div className="relative mr-[9px] ml-[94px] flex items-center">
        <select
          aria-label="Selection filter"
          className="h-[20px] w-[145px] appearance-none border border-[#b8bdbf] bg-[#fafafa] pl-[5px] text-[10px] leading-[14px] text-[#555]"
        >
          <option>Sketch</option>
        </select>
        <span className="pointer-events-none absolute right-px flex h-[18px] w-[13px] items-center justify-center border-l border-[#c5c5c5] bg-[#f0f0f0]">
          <Caret />
        </span>
      </div>
    </footer>
  );
}

function TaskBar() {
  const open = "rounded-sm border border-[#b5dcf0] bg-linear-to-br from-[#b9dff0] via-[#70b5dc] to-[#77b9dc]";
  return (
    <div className="flex h-[38px] shrink-0 items-stretch border-t-2 border-[#1d5580] bg-[linear-gradient(to_right,#205b94_0%,#3c93ca_20%,#3b97cf_33%,#2681c4_50%,#1f69b5_68%,#1b5ba4_73%,#154585_77%,#123c73_100%)] [&>button]:flex [&>button]:shrink-0 [&>button]:items-center [&>button]:justify-center">
      <button aria-label="Start" className="ml-[7px] w-[36px]">
        <Icon w={36} h={36}>
          <circle cx="18" cy="18" r="16.500" fill="#2b5d8c" stroke="#a9cde3" />
          <path d="M3 14C7-1 29-1 33 14c-9 5-21 5-30 0z" fill="#9fb9cb" opacity=".75" />
          <path d="M11 10c3-2 4-2 7 0l-2 7c-3-2-5-1-7 0z" fill="#e56728" />
          <path d="M19 10.500c3 2 5 1 7 0l-2 7c-3 1-4 1-7 0z" fill="#91c241" />
          <path d="M9 18.500c3-2 4-1 7 0l-2 7c-3-2-4-2-7 0z" fill="#3fa3de" />
          <path d="M16.500 19c3 2 5 1 7 0l-2 7c-3 1-5 1-7 0z" fill="#f5cb32" />
        </Icon>
      </button>
      <button aria-label="Explorer" className={`ml-[13px] w-[52px] ${open}`}>
        <Icon w={32} h={30}>
          <path d="M3 25V5h7l2-3h7l2 3h7l2 20z" fill="#ddb35c" />
          <path d="M6 8V4h5v4M14 7V3h4v4M20 8V4h6v4" fill="#f7f3df" />
          <path d="M7 3h2v3H7zM22 4h3v2h-3z" fill="#4b9962" />
          <path d="M2 8h28l-1 18H3z" fill="#f4dc91" stroke="#dab55d" />
          <path d="M7 29V19h19v10h-5v-5h-9v5z" fill="#a3d1ea" stroke="#e8f6fb" />
        </Icon>
      </button>
      <button aria-label="Firefox" className="ml-[18px] w-[32px]">
        <Icon w={30} h={32}>
          <circle cx="15" cy="16" r="13" fill="#1f5a9d" />
          <path d="M14 3c6-1 10 2 11 6-3-3-8-3-9 1z" fill="#65b4dc" />
          <path d="M2 10l2-5 4 3c3-1 5 0 6 2l-3 3c-2 5 3 9 8 7 4-1 6-5 5-10 5 5 5 12 0 16-6 6-16 4-20-2-3-4-4-9-2-14z" fill="#dd5720" />
          <path d="M25 9c2 6-1 14-8 16-5 1-9-1-10-4 1 7 11 10 17 5 5-4 5-12 1-17z" fill="#f6b62d" />
        </Icon>
      </button>
      <button aria-label="Internet Explorer" className="ml-[26px] w-[32px]">
        <Icon w={32} h={32}>
          <path d="M24 22c-3 7-15 6-15-5 0-10 15-11 16 1H9" stroke="#c5edf9" strokeWidth="6" />
          <path d="M24 22c-3 7-15 6-15-5 0-10 15-11 16 1H9" stroke="#46b4e6" strokeWidth="4" />
          <path d="M5 27C0 22 10 7 25 4c4 0 4 2 3 4" stroke="#f1d04a" strokeWidth="2.500" />
        </Icon>
      </button>
      <button aria-label="Creo Parametric" className={`ml-[14px] w-[55px] ${open}`}>
        <Icon w={30} h={32}>
          <path d="M1 2l27 2-2 25-20-1z" fill="#e4efe4" stroke="#b3cbb3" />
          <path d="M6 7h19v18H6z" fill="#b4ce36" stroke="#607924" />
          <path d="M13 7h12v12H13z" fill="#79bdd1" stroke="#607924" />
        </Icon>
      </button>
      <button aria-label="Media" className={`ml-[3px] w-[55px] ${open}`}>
        <Icon w={32} h={30}>
          <path d="M23 3l5 21-8 3z" fill="#e7eef2" />
          <path d="M11 4l13-2-4 21-16-2z" fill="#6aaabd" stroke="#a7ced8" />
          <path d="M11 4l12-1-12 14z" fill="#a4cfd9" />
        </Icon>
      </button>
      <div className="flex flex-1 justify-end overflow-hidden pr-[26px]">
        <Icon w={110} h={36}>
          <defs>
            <filter id="glow">
              <feGaussianBlur stdDeviation="1.500" />
            </filter>
          </defs>
          <path d="M8 -2C45 6 70 20 88 40" stroke="#8cbcec" strokeWidth="6" filter="url(#glow)" />
        </Icon>
      </div>
      <div className="flex items-center">
        <div className="flex h-[22px] w-[108px] items-center gap-[8px] overflow-hidden bg-linear-to-b from-[#7bb1e9] to-[#346cb9] pl-[7px]">
          <Icon w={22} h={20}>
            <circle cx="11" cy="10" r="10" fill="#f3dcf3" />
            <path d="M4 14V9c0-4 5-4 5 0v3M9 9c0-5 4-5 4 0v3M13 9c0-4 5-4 5 0v5" stroke="#d77fc7" strokeWidth="2" />
          </Icon>
          <Icon w={13} h={12}>
            <path d="M0 2h7v7H0z" fill="#fff" />
          </Icon>
          <Icon w={12} h={12}>
            <path d="M1 2h10v8H1z" fill="#fff" />
            <circle cx="7" cy="6" r="2" fill="#4a83c8" />
          </Icon>
          <Icon w={13} h={12}>
            <path d="M1 1l6 1-1 2 6 6M1 5v6h7" stroke="#eee" strokeWidth="1.500" />
          </Icon>
          <Icon w={9} h={10}>
            <path d="M3 1h5v4M1 4h4v4H1z" stroke="#fff" />
          </Icon>
        </div>
        <button aria-label="Show hidden icons" className="ml-[7px]">
          <Icon w={8} h={6}>
            <path d="M0 5h8L4 1z" fill="#fff" />
          </Icon>
        </button>
        <div className="ml-[11px] flex w-[90px] items-center gap-[7px]">
          <Icon w={16} h={14}>
            <path d="M1 5h3l4-4v12L4 9H1z" fill="#eee" />
            <path d="M10 4v6M12 3c2 3 2 5 0 8M14 1c2 4 2 8 0 11" stroke="#c8d8e5" />
          </Icon>
          <Icon w={15} h={15}>
            <path d="M1.500 1v14" stroke="#eee" strokeWidth="1.500" />
            <path d="M3 2h9v7H3z" fill="#eee" />
            <circle cx="10" cy="10" r="4.500" fill="#d62c2e" />
            <path d="M8 8l4 4M12 8l-4 4" stroke="#fff" strokeWidth="1.300" />
          </Icon>
          <Icon w={15} h={15}>
            <path d="M2 2h8v11H2z" stroke="#eee" strokeWidth="1.500" />
            <path d="M7 5h6v5H7zM8 2v3M12 2v3M10 10v4" fill="#eee" stroke="#eee" />
          </Icon>
          <Icon w={16} h={14}>
            <path d="M0 10h6" stroke="#888" />
            <path d="M5 7l6-4v9l-6-1z" fill="#d8951e" />
            <path d="M11 1l3 2v8l-3 1z" fill="#e5bd4c" />
          </Icon>
        </div>
        <time className="mr-[10px] ml-[5px] text-center font-['Noto_Sans',sans-serif] text-[11px] leading-[16px] text-white">
          23:26
          <br />
          25-07-2016
        </time>
        <button aria-label="Show desktop" className="h-[36px] w-[6px] border-l border-[#6c94be] bg-[#224d80]" />
      </div>
    </div>
  );
}

export default function App() {
  return (
    <div className="flex h-screen w-full overflow-hidden bg-[#f8f8f8] font-['Liberation_Sans',Arial,sans-serif]">
      <div className="flex min-w-0 flex-1 flex-col">
        <TitleBar />
        <RibbonTabs />
        <Ribbon />
        <main className="relative flex min-h-0 flex-1">
          <ModelTree />
          <div className="relative min-w-0 flex-1">
            <Graphics />
            <ViewToolbar />
          </div>
        </main>
        <StatusBar />
        <TaskBar />
      </div>
      <div className="w-[6px] shrink-0 bg-[linear-gradient(to_bottom,#b59c58_0%,#c9b88a_8%,#e0cda4_11%,#5b4516_13%,#54400f_20%,#9c8648_24%,#b8a478_31%,#8b7457_38%,#8a5a35_47%,#4a3520_50%,#2f2414_53%,#a48b55_57%,#a08a5a_65%,#1c1712_67%,#5d4a35_71%,#1f2f2a_77%,#17201c_84%,#a3987c_89%,#b0a68c_100%)]" />
    </div>
  );
}
